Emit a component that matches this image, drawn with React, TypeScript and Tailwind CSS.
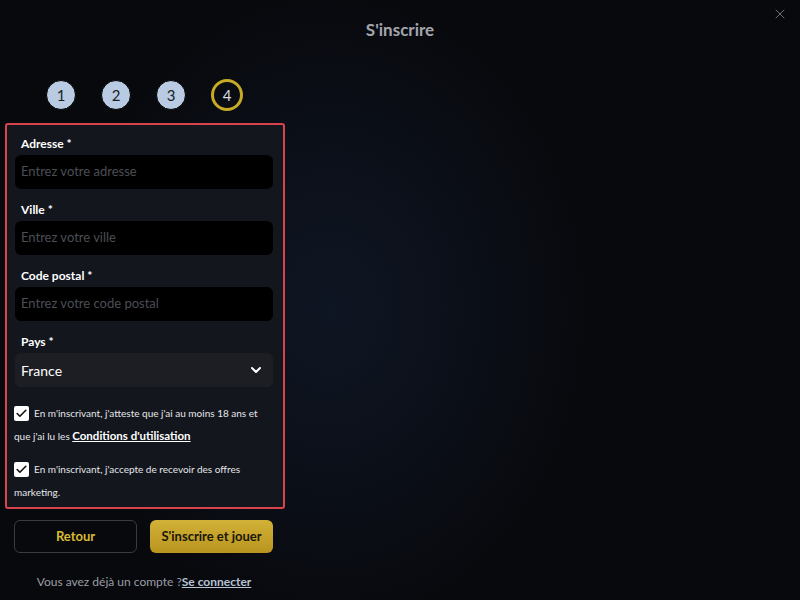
import React from 'react';
import { ChevronDown, X, Check } from 'lucide-react';

const fields = [
  { label: 'Adresse', placeholder: 'Entrez votre adresse' },
  { label: 'Ville', placeholder: 'Entrez votre ville' },
  { label: 'Code postal', placeholder: 'Entrez votre code postal' },
];

const CheckBox = () => (
  <span className="inline-flex items-center justify-center w-[15px] h-[15px] rounded-[2px] bg-white align-[-3px] mr-[5px]">
    <Check size={13} strokeWidth={3} className="text-[#111]" />
  </span>
);

const App = () => {
  return (
    <div
      className="relative w-[800px] h-[600px] overflow-hidden bg-[#08090d] bg-[radial-gradient(ellipse_260px_320px_at_330px_310px,#0f1623_0%,#0b0f18_55%,transparent_100%)] text-white"
      style={{ fontFamily: 'Lato, "Noto Sans", sans-serif' }}
    >
      <button className="absolute right-[12px] top-[6px] text-[#6b6e75]">
        <X size={16} strokeWidth={1.5} />
      </button>

      <h1 className="pt-[20px] text-center text-[17px] leading-[20px] font-bold text-[#a3a6ad]">
        S'inscrire
      </h1>

      <div className="flex gap-[25px] ml-[46px] mt-[40px]">
        {[1, 2, 3].map((n) => (
          <div
            key={n}
            className="w-[30px] h-[30px] rounded-full bg-[#b8cbe3] border border-black flex items-center justify-center text-[15px] text-[#1a1d24]"
          >
            {n}
          </div>
        ))}
        <div className="w-[32px] h-[32px] -mt-px rounded-full border-[3px] border-[#c7ab25] flex items-center justify-center text-[15px] text-[#d9dce2]">
          4
        </div>
      </div>

      <div className="ml-[5px] mt-[12px] w-[280px] h-[386px] border-2 border-[#d9434b] rounded-[3px] bg-[#13161d] pl-[8px] pr-[10px] pt-[11px]">
        {fields.map((f, i) => (
          <div key={f.label} className={i > 0 ? 'mt-[13px]' : ''}>
            <div className="pl-[6px] text-[12px] leading-[16px] font-bold text-white mb-[3px]">
              {f.label} *
            </div>
            <div className="h-[34px] rounded-[6px] bg-black flex items-center pl-[6px] text-[13px] text-[#4b4e55]">
              {f.placeholder}
            </div>
          </div>
        ))}
        <div className="mt-[13px]">
          <div className="pl-[6px] text-[12px] leading-[16px] font-bold text-white mb-[3px]">Pays *</div>
          <div className="h-[34px] rounded-[6px] bg-[#1d1e23] flex items-center justify-between pl-[6px] pr-[9px] text-[14px] text-white">
            <span>France</span>
            <ChevronDown size={16} strokeWidth={3} />
          </div>
        </div>

        <p className="mt-[15px] -ml-px text-[10px] leading-[23px] text-[#e6e7ea]">
          <CheckBox />
          En m'inscrivant, j'atteste que j'ai au moins 18 ans et que j'ai lu les{' '}
          <a className="font-bold text-[11.5px] leading-[20px] text-white underline">Conditions d'utilisation</a>
        </p>
        <p className="mt-[10px] -ml-px text-[10px] leading-[23px] text-[#e6e7ea]">
          <CheckBox />
          En m'inscrivant, j'accepte de recevoir des offres marketing.
        </p>
      </div>

      <div className="flex gap-[13px] ml-[14px] mt-[11px]">
        <button className="w-[123px] h-[33px] rounded-[6px] border border-[#3b3b3b] text-[13px] font-bold text-[#d8bb34]">
          Retour
        </button>
        <button className="w-[123px] h-[33px] rounded-[6px] bg-[linear-gradient(180deg,#d2b138,#b8951f)] text-[13px] font-bold text-[#1a1608]">
          S'inscrire et jouer
        </button>
      </div>

      <p className="w-[288px] mt-[20px] text-center text-[12px] text-[#9a9ea6]">
        Vous avez déjà un compte ?
        <a className="font-bold underline text-[#b7c4d6]">Se connecter</a>
      </p>
    </div>
  );
};

export default App;
